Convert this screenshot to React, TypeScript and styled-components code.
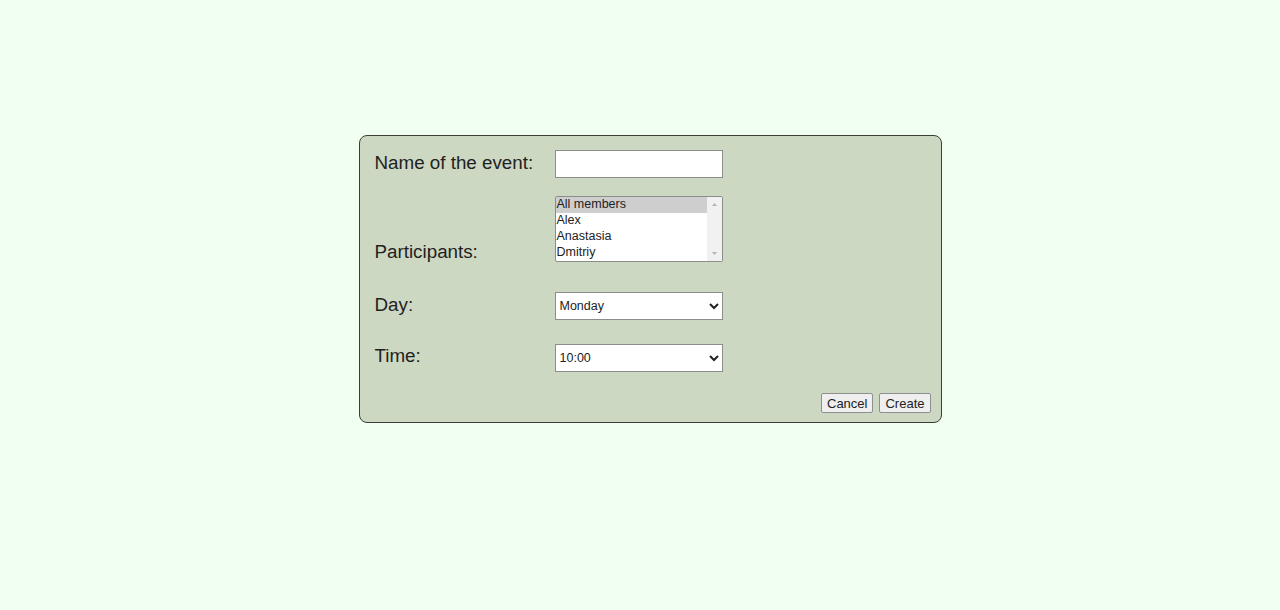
import React from "react";
import styled, { createGlobalStyle } from "styled-components";

const GlobalStyle = createGlobalStyle`
  html, body {
    margin: 0;
    padding: 0;
    background-color: #f0fff0;
    font-family: "Liberation Sans", Arial, sans-serif;
  }
`;

const Page = styled.div`
  min-height: 610px;
  box-sizing: border-box;
  padding: 135px 0 0 20px;
  display: flex;
  justify-content: center;
  align-items: flex-start;
`;

const EventForm = styled.form`
  box-sizing: border-box;
  width: 583px;
  height: 288px;
  padding: 14px 10px 9px 15px;
  background-color: #cdd8c3;
  border: 1px solid #3a3d38;
  border-radius: 8px;
  display: flex;
  flex-direction: column;
`;

const Row = styled.div<{ $spacing: number; $align: string }>`
  display: flex;
  align-items: ${(p) => p.$align};
  margin-top: ${(p) => p.$spacing}px;
`;

const Label = styled.label<{ $lift?: number }>`
  width: 180px;
  flex-shrink: 0;
  font-size: 18.8px;
  line-height: 21px;
  color: #1f221e;
  margin-bottom: ${(p) => p.$lift ?? 0}px;
`;

const TextInput = styled.input`
  box-sizing: border-box;
  width: 168px;
  height: 28px;
  margin: 0;
  border: 1px solid #8a8d88;
  background: #fff;
  font-family: "Liberation Sans", Arial, sans-serif;
  font-size: 13px;
`;

const ListWrap = styled.div`
  position: relative;
  width: 168px;
  height: 66px;
`;

const ListBox = styled.select`
  box-sizing: border-box;
  display: block;
  width: 168px;
  height: 66px;
  margin: 0;
  padding: 0;
  border: 1px solid #8a8d88;
  background: #fff;
  font-family: "Liberation Sans", Arial, sans-serif;
  font-size: 12.5px;
  color: #222;

  option {
    padding: 0 1px;
    line-height: 16px;
    height: 16px;
  }

  option:checked {
    background: #cecece linear-gradient(#cecece, #cecece);
    color: #222;
  }
`;

/* the scrollbar of the list box, drawn over its right edge */
const ScrollBar = styled.div`
  position: absolute;
  top: 1px;
  right: 1px;
  bottom: 1px;
  width: 15px;
  background: #f1f1f1;
  display: flex;
  flex-direction: column;
  justify-content: space-between;
  align-items: center;
  pointer-events: none;
`;

const ScrollArrow = styled.svg`
  display: block;
  width: 15px;
  height: 15px;
`;

const Dropdown = styled.select`
  box-sizing: border-box;
  width: 168px;
  height: 28px;
  margin: 0;
  padding: 0;
  border: 1px solid #8a8d88;
  border-radius: 0;
  background: #fff;
  font-family: "Liberation Sans", Arial, sans-serif;
  font-size: 12.5px;
  color: #222;
`;

const Actions = styled.div`
  margin-top: auto;
  display: flex;
  justify-content: flex-end;
  gap: 6px;
`;

const Button = styled.button`
  box-sizing: border-box;
  height: 20px;
  padding: 0 5px;
  margin: 0;
  border: 1px solid #8f8f8f;
  border-radius: 2px;
  background: #efefef;
  font-family: "Liberation Sans", Arial, sans-serif;
  font-size: 13px;
  color: #222;
`;

const members = ["All members", "Alex", "Anastasia", "Dmitriy", "Ivan", "Maria"];
const days = ["Monday", "Tuesday", "Wednesday", "Thursday", "Friday"];
const times = ["10:00", "11:00", "12:00", "13:00", "14:00", "15:00", "16:00", "17:00", "18:00"];

export default function App() {
  return (
    <>
      <GlobalStyle />
      <Page>
        <EventForm onSubmit={(e) => e.preventDefault()}>
          <Row $spacing={0} $align="center">
            <Label htmlFor="event-name" $lift={4}>
              Name of the event:
            </Label>
            <TextInput id="event-name" type="text" />
          </Row>
          <Row $spacing={18} $align="flex-end">
            <Label htmlFor="participants">Participants:</Label>
            <ListWrap>
              <ListBox id="participants" multiple size={4} defaultValue={["All members"]}>
                {members.map((m) => (
                  <option key={m} value={m}>
                    {m}
                  </option>
                ))}
              </ListBox>
              <ScrollBar>
                <ScrollArrow viewBox="0 0 15 15">
                  <path d="M5 9 L7.5 6 L10 9 Z" fill="#b4b4b4" />
                </ScrollArrow>
                <ScrollArrow viewBox="0 0 15 15">
                  <path d="M5 6 L7.5 9 L10 6 Z" fill="#b4b4b4" />
                </ScrollArrow>
              </ScrollBar>
            </ListWrap>
          </Row>
          <Row $spacing={30} $align="center">
            <Label htmlFor="day" $lift={4}>
              Day:
            </Label>
            <Dropdown id="day" defaultValue="Monday">
              {days.map((d) => (
                <option key={d}>{d}</option>
              ))}
            </Dropdown>
          </Row>
          <Row $spacing={24} $align="center">
            <Label htmlFor="time" $lift={5}>
              Time:
            </Label>
            <Dropdown id="time" defaultValue="10:00">
              {times.map((t) => (
                <option key={t}>{t}</option>
              ))}
            </Dropdown>
          </Row>
          <Actions>
            <Button type="button">Cancel</Button>
            <Button type="submit">Create</Button>
          </Actions>
        </EventForm>
      </Page>
    </>
  );
}
